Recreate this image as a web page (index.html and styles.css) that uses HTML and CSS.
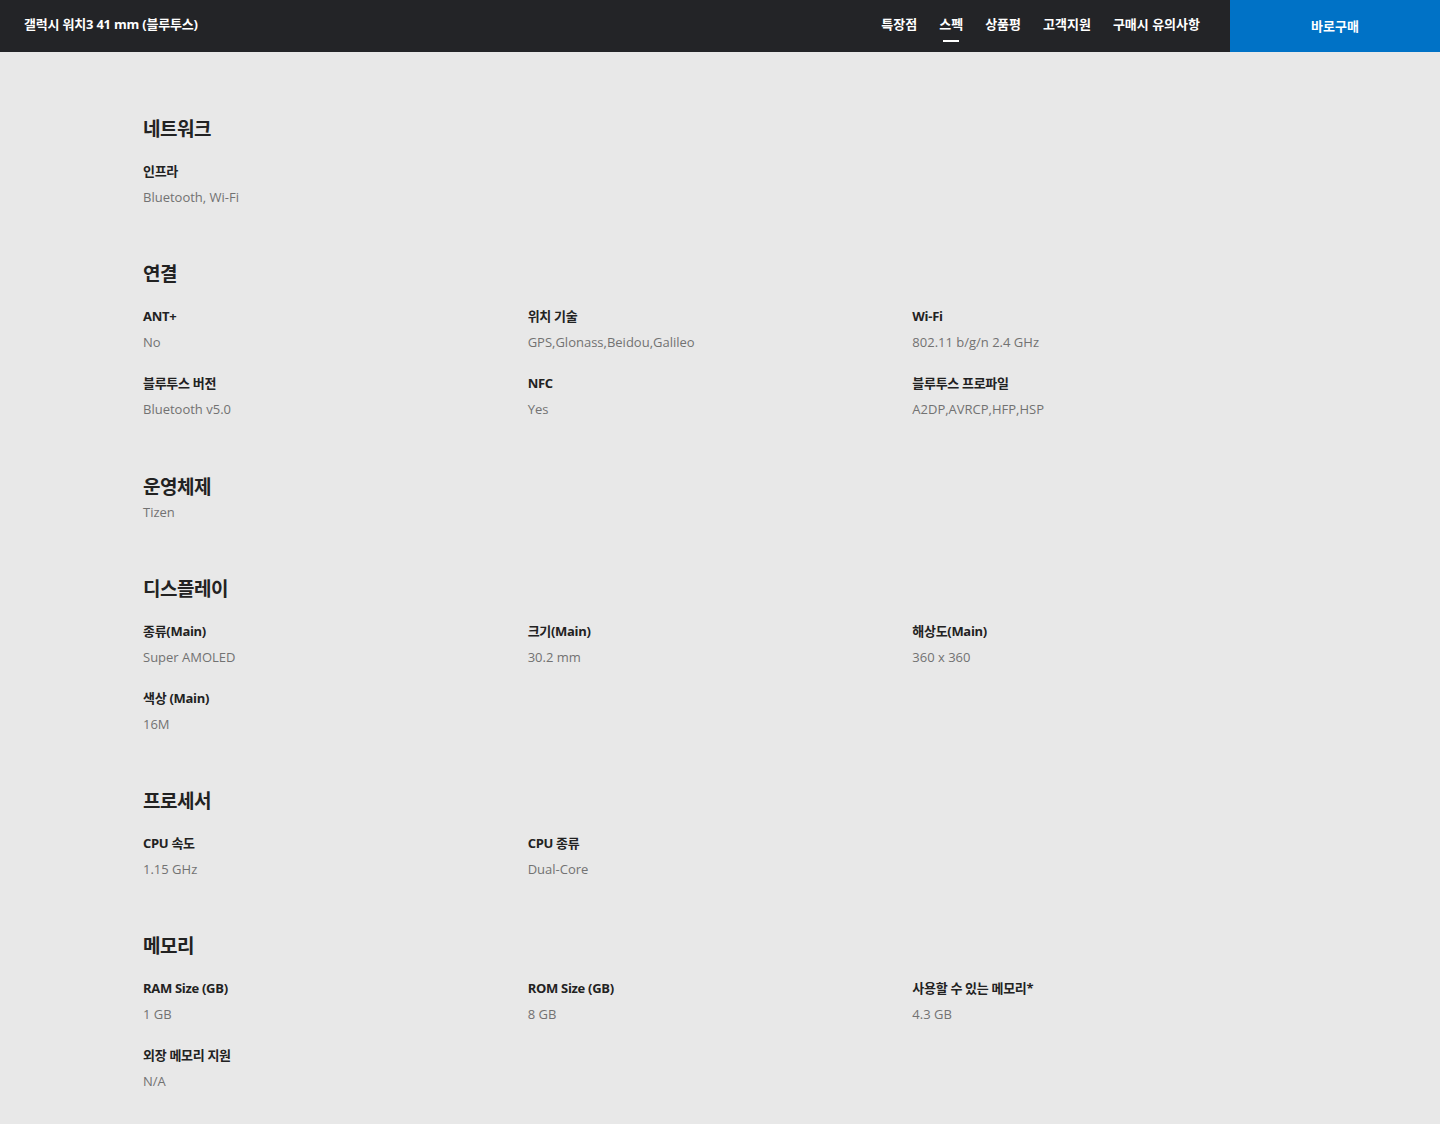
FILE: index.html
```html
<!DOCTYPE html>
<html lang="ko">
<head>
<meta charset="utf-8">
<title>갤럭시 워치3 41 mm (블루투스) 스펙</title>
<link rel="stylesheet" href="styles.css">
</head>
<body>
<header class="topbar">
  <div class="title">갤럭시 워치3 41 mm (블루투스)</div>
  <nav class="nav">
    <a class="nav-item">특장점</a>
    <a class="nav-item active">스펙</a>
    <a class="nav-item">상품평</a>
    <a class="nav-item">고객지원</a>
    <a class="nav-item">구매시 유의사항</a>
  </nav>
  <a class="buy">바로구매</a>
</header>
<main class="specs">
  <section class="sec">
    <h2 class="sec-title">네트워크</h2>
    <div class="grid">
      <div class="item"><div class="label">인프라</div><div class="value">Bluetooth, Wi-Fi</div></div>
    </div>
  </section>
  <section class="sec">
    <h2 class="sec-title">연결</h2>
    <div class="grid">
      <div class="item"><div class="label">ANT+</div><div class="value">No</div></div>
      <div class="item"><div class="label">위치 기술</div><div class="value">GPS,Glonass,Beidou,Galileo</div></div>
      <div class="item"><div class="label">Wi-Fi</div><div class="value">802.11 b/g/n 2.4 GHz</div></div>
      <div class="item"><div class="label">블루투스 버전</div><div class="value">Bluetooth v5.0</div></div>
      <div class="item"><div class="label">NFC</div><div class="value">Yes</div></div>
      <div class="item"><div class="label">블루투스 프로파일</div><div class="value">A2DP,AVRCP,HFP,HSP</div></div>
    </div>
  </section>
  <section class="sec">
    <h2 class="sec-title tight">운영체제</h2>
    <div class="value">Tizen</div>
  </section>
  <section class="sec">
    <h2 class="sec-title">디스플레이</h2>
    <div class="grid">
      <div class="item"><div class="label">종류(Main)</div><div class="value">Super AMOLED</div></div>
      <div class="item"><div class="label">크기(Main)</div><div class="value">30.2 mm</div></div>
      <div class="item"><div class="label">해상도(Main)</div><div class="value">360 x 360</div></div>
      <div class="item"><div class="label">색상 (Main)</div><div class="value">16M</div></div>
    </div>
  </section>
  <section class="sec">
    <h2 class="sec-title">프로세서</h2>
    <div class="grid">
      <div class="item"><div class="label">CPU 속도</div><div class="value">1.15 GHz</div></div>
      <div class="item"><div class="label">CPU 종류</div><div class="value">Dual-Core</div></div>
    </div>
  </section>
  <section class="sec">
    <h2 class="sec-title">메모리</h2>
    <div class="grid">
      <div class="item"><div class="label">RAM Size (GB)</div><div class="value">1 GB</div></div>
      <div class="item"><div class="label">ROM Size (GB)</div><div class="value">8 GB</div></div>
      <div class="item"><div class="label">사용할 수 있는 메모리*</div><div class="value">4.3 GB</div></div>
      <div class="item"><div class="label">외장 메모리 지원</div><div class="value">N/A</div></div>
    </div>
  </section>
</main>
</body>
</html>
```
FILE: styles.css
```css
* { box-sizing: border-box; }
html, body { margin: 0; padding: 0; }
body {
  background: #e8e8e8;
  font-family: "Open Sans", "Noto Sans CJK KR", sans-serif;
  color: #222;
  min-height: 1124px;
}
.topbar {
  height: 52px;
  background: #232427;
  display: flex;
  align-items: center;
  color: #fff;
}
.title {
  padding-left: 24px;
  padding-bottom: 6px;
  font-size: 13px;
  font-weight: 700;
  flex: 1;
  letter-spacing: -0.2px;
}
.nav {
  display: flex;
  gap: 22px;
  margin-right: 30px;
  padding-bottom: 4px;
  height: 100%;
  align-items: center;
}
.nav-item {
  position: relative;
  font-size: 13px;
  font-weight: 700;
  color: #fff;
  text-decoration: none;
  line-height: 20px;
}
.nav-item.active::after {
  content: "";
  position: absolute;
  left: 50%;
  transform: translateX(-50%);
  bottom: -8px;
  width: 16px;
  height: 2px;
  background: #fff;
}
.buy {
  width: 210px;
  height: 100%;
  background: #0072c6;
  color: #fff;
  font-size: 13px;
  font-weight: 700;
  display: flex;
  align-items: center;
  justify-content: center;
  padding-bottom: 1px;
}
.specs {
  width: 1154px;
  margin: 0 auto;
  padding-top: 64px;
}
.sec { margin-bottom: 54.25px; }
.sec-title {
  margin: 0 0 20px;
  padding-top: 1px;
  font-size: 19px;
  line-height: 24px;
  font-weight: 700;
  color: #222;
  letter-spacing: -0.5px;
}
.sec-title.tight { margin-bottom: 3px; }
.grid {
  display: grid;
  grid-template-columns: repeat(3, 1fr);
  row-gap: 21px;
}
.label {
  font-size: 13px;
  line-height: 20px;
  font-weight: 700;
  color: #222;
  margin-bottom: 6px;
  letter-spacing: -0.3px;
}
.value {
  font-size: 13px;
  line-height: 20px;
  color: #727272;
}
```
